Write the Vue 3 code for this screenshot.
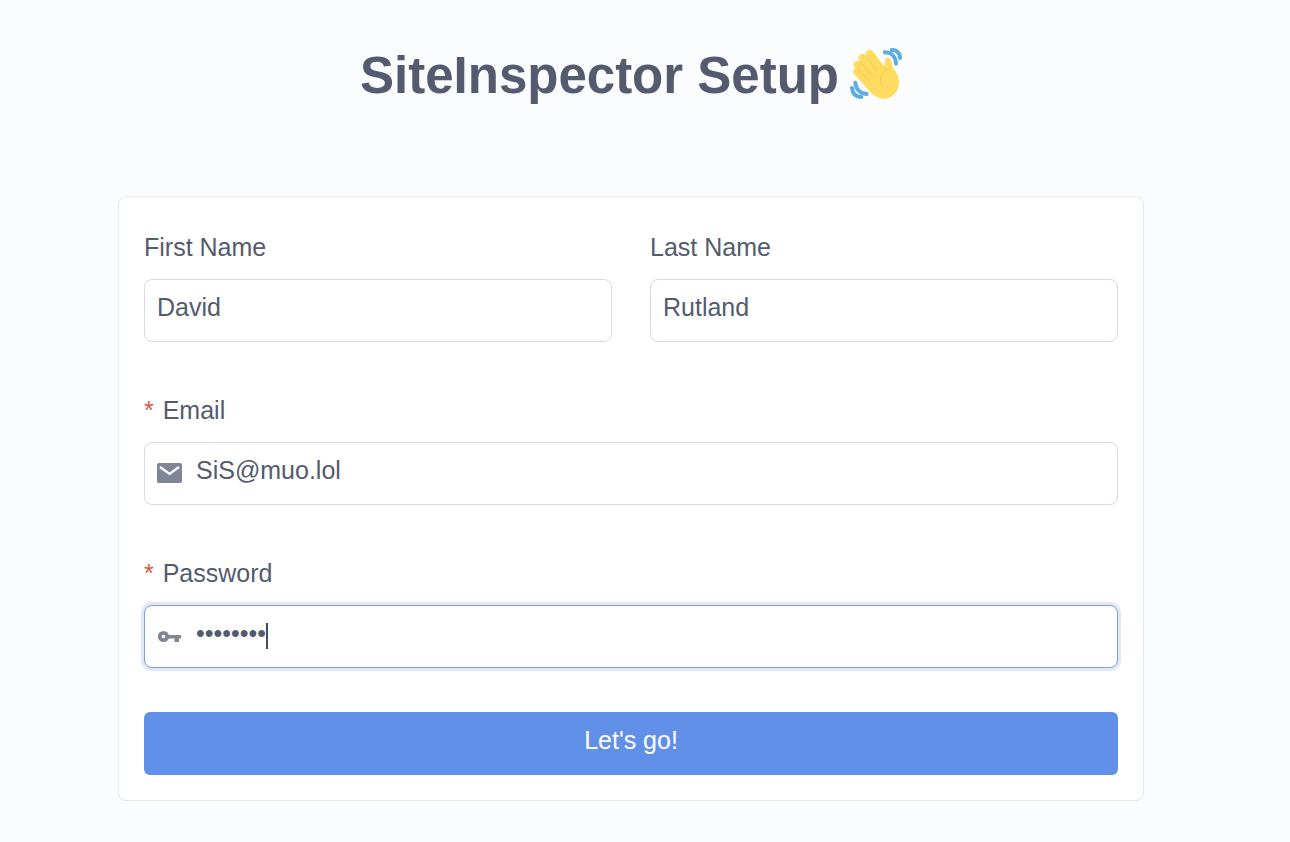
<script setup>
import { ref } from 'vue'

const firstName = ref('David')
const lastName = ref('Rutland')
const email = ref('SiS@muo.lol')
const password = ref('password')
</script>

<template>
  <main class="setup">
    <h1 class="setup__title">
      SiteInspector Setup
      <svg class="setup__wave" viewBox="27 36 156 156" role="img" aria-label="Waving hand">
        <g fill="none" stroke="#ffdc5f" stroke-width="24" stroke-linecap="round">
          <path d="M86 54 L130 112" />
          <path d="M65 66 L115 132" />
          <path d="M50 86 L105 147" />
          <path d="M49 107 L98 160" />
        </g>
        <path
          fill="#ffdc5f"
          d="M96 47 L124 84 Q132 94 132 82 Q130 64 142 65 Q150 66 152 79 C155 98 165 106 171 121 C180 148 168 178 141 187 C119 193 99 181 84 164 L58 130 L90 82 Z"
        />
        <g fill="none" stroke="#f2c64f" stroke-width="3" stroke-linecap="round">
          <path d="M75 62 L107 105" />
          <path d="M58 78 L96 124" />
          <path d="M50 97 L85 135" />
          <path d="M136 101 C119 112 114 127 122 148" />
        </g>
        <g fill="none" stroke="#5dade5" stroke-width="12" stroke-linecap="round">
          <path d="M131 49 C151 49 164 62 165 83" />
          <path d="M152 42 C166 41 177 51 177 66" />
          <path d="M43 140 C45 160 57 173 77 174" />
          <path d="M33 156 C35 174 46 183 61 183" />
        </g>
      </svg>
    </h1>

    <form class="card" @submit.prevent>
      <div class="card__row">
        <div class="field">
          <label class="field__label" for="first-name">First Name</label>
          <div class="field__box">
            <input id="first-name" v-model="firstName" class="field__input" type="text" />
          </div>
        </div>
        <div class="field">
          <label class="field__label" for="last-name">Last Name</label>
          <div class="field__box">
            <input id="last-name" v-model="lastName" class="field__input" type="text" />
          </div>
        </div>
      </div>

      <div class="field">
        <label class="field__label" for="email"><span class="field__required">*</span> Email</label>
        <div class="field__box">
          <svg class="field__icon" viewBox="0 0 26 26" aria-hidden="true">
            <rect x="0" y="2" width="25" height="20" rx="2" fill="#808698" />
            <path d="M3 6 L12.500 13 L22 6" fill="none" stroke="#fff" stroke-width="2.200" />
          </svg>
          <input id="email" v-model="email" class="field__input" type="email" required />
        </div>
      </div>

      <div class="field">
        <label class="field__label" for="password"><span class="field__required">*</span> Password</label>
        <div class="field__box field__box--active">
          <svg class="field__icon" viewBox="0 0 26 26" aria-hidden="true">
            <circle cx="6.500" cy="12.500" r="3.700" fill="none" stroke="#808698" stroke-width="3.800" />
            <path d="M11 11 H24 V14.500 H22 V18 H17.500 V14.500 H11 Z" fill="#808698" />
          </svg>
          <div class="field__entry">
            <input id="password" v-model="password" class="field__input field__input--password" type="password" required />
            <span class="field__caret" aria-hidden="true" />
          </div>
        </div>
      </div>

      <button class="card__submit" type="submit">Let's go!</button>
    </form>
  </main>
</template>

<style>
body {
  margin: 0;
  background: #fafcfe;
}
</style>

<style scoped>
.setup {
  box-sizing: border-box;
  min-height: 100vh;
  padding: 46px 146px 40px 118px;
  background: #fafcfe;
  color: #545b6f;
  font-family: "Liberation Sans", Arial, sans-serif;
  font-size: 25px;
}

.setup__title {
  display: flex;
  align-items: center;
  justify-content: center;
  gap: 11px;
  margin: 0 0 90px;
  font-size: 51px;
  line-height: 60px;
}

.setup__wave {
  flex: none;
  width: 52px;
  height: 52px;
  margin-bottom: 4px;
}

.card {
  padding: 31px 25px 25px;
  border: 1px solid #e4e7ed;
  border-radius: 8px;
  background: #fff;
}

.card__row {
  display: grid;
  grid-template-columns: 1fr 1fr;
  gap: 38px;
}

.field {
  min-width: 0;
  margin-bottom: 49px;
}

.field:has(+ .card__submit) {
  margin-bottom: 44px;
}

.field__label {
  display: block;
  margin-bottom: 13px;
  line-height: 38px;
}

.field__required {
  margin-right: 2px;
  color: #d75a3c;
}

.field__box {
  display: flex;
  align-items: center;
  gap: 13px;
  box-sizing: border-box;
  height: 63px;
  padding: 0 12px;
  border: 1px solid #d9dbe0;
  border-radius: 8px;
  background: #fff;
}

.field__box--active {
  border-color: #7f9fda;
  box-shadow: 0 0 0 3px #e0e8f7;
}

.field__icon {
  flex: none;
  width: 26px;
  height: 26px;
}

.field__entry {
  position: relative;
  flex: 1;
  min-width: 0;
}

.field__input {
  display: block;
  box-sizing: border-box;
  width: 100%;
  height: 36px;
  padding: 0 0 6px;
  border: none;
  background: transparent;
  color: inherit;
  font: inherit;
  outline: none;
}

.field__input--password {
  caret-color: transparent;
}

.field__caret {
  position: absolute;
  top: 4px;
  left: 70px;
  width: 2px;
  height: 26px;
  background: #454c60;
}

.card__submit {
  display: block;
  width: 100%;
  height: 63px;
  padding: 0 0 6px;
  border: none;
  border-radius: 6px;
  background: #6190e8;
  color: #fff;
  font: inherit;
  cursor: pointer;
}
</style>
